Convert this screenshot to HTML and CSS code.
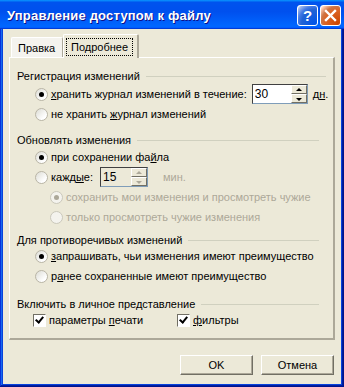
FILE: index.html
```html
<!DOCTYPE html>
<html lang="ru">
<head>
    <meta charset="UTF-8">
    <title>Управление доступом к файлу</title>
    <link rel="stylesheet" href="styles.css">
</head>
<body>
    <div class="window">
        <!-- Title bar -->
        <div class="titlebar">
            <span class="title">Управление доступом к файлу</span>
            <div class="controls">
                <span class="ctl help">?</span>
                <span class="ctl close">
                    <svg width="13" height="13" viewBox="0 0 13 13"><path d="M2 2 L11 11 M11 2 L2 11" stroke="#fff" stroke-width="2.4" stroke-linecap="square"/></svg>
                </span>
            </div>
        </div>

        <div class="frame">
            <div class="tabs">
                <div class="tab">Правка</div>
                <div class="tab active"><span class="focus">Подробнее</span></div>
            </div>

            <div class="panel">
                <div class="heading wide">Регистрация изменений</div>
                <div class="row">
                    <span class="radio checked"></span>
                    <span class="label"><u>х</u>ранить журнал изменений в течение:</span>
                    <span class="spin days"><span class="value">30</span><span class="arrows"><span class="up"></span><span class="down"></span></span></span>
                    <span class="unit">д<u>н</u>.</span>
                </div>
                <div class="row">
                    <span class="radio"></span>
                    <span class="label">не хранить <u>ж</u>урнал изменений</span>
                </div>

                <div class="heading gap">Обновлять изменения</div>
                <div class="row tight">
                    <span class="radio checked"></span>
                    <span class="label">при сохранении фа<u>й</u>ла</span>
                </div>
                <div class="row">
                    <span class="radio"></span>
                    <span class="label">кажд<u>ы</u>е:</span>
                    <span class="spin mins disabled"><span class="value">15</span><span class="arrows"><span class="up"></span><span class="down"></span></span></span>
                    <span class="unit muted">мин.</span>
                </div>
                <div class="row sub">
                    <span class="radio checked disabled"></span>
                    <span class="label muted">сохранить мои изменения и просмотреть чужие</span>
                </div>
                <div class="row sub">
                    <span class="radio disabled"></span>
                    <span class="label muted">только просмотреть чужие изменения</span>
                </div>

                <div class="heading small-gap">Для противоречивых изменений</div>
                <div class="row tighter">
                    <span class="radio checked"></span>
                    <span class="label"><u>з</u>апрашивать, чьи изменения имеют преимущество</span>
                </div>
                <div class="row">
                    <span class="radio"></span>
                    <span class="label">р<u>а</u>нее сохраненные имеют преимущество</span>
                </div>

                <div class="heading big-gap">Включить в личное представление</div>
                <div class="row checks tighter">
                    <span class="check-item">
                        <span class="checkbox"></span>
                        <span class="label">параметры <u>п</u>ечати</span>
                    </span>
                    <span class="check-item">
                        <span class="checkbox"></span>
                        <span class="label"><u>ф</u>ильтры</span>
                    </span>
                </div>
            </div>

            <div class="buttons">
                <button class="btn">OK</button>
                <button class="btn">Отмена</button>
            </div>
        </div>
    </div>
</body>
</html>
```

FILE: styles.css
```css
html, body {
    margin: 0;
    padding: 0;
}
body {
    width: 344px;
    height: 387px;
    overflow: hidden;
    font-family: "Liberation Sans", Arial, sans-serif;
    font-size: 11px;
    color: #000;
}
.window {
    width: 344px;
    height: 387px;
    display: flex;
    flex-direction: column;
    background: #0842dc;
    box-shadow: inset -1px -1px #00138c, inset 1px 0 #0831d9, inset -2px -2px #001ea0, inset 2px 0 #166aee;
}
.titlebar {
    height: 29px;
    flex: none;
    display: flex;
    align-items: center;
    justify-content: space-between;
    padding: 0 3px 0 7px;
    background: linear-gradient(180deg, #0997ff, #0053ee 8%, #0050ee 40%, #06f 88%, #06f 93%, #005bff 95%, #003dd7 96%, #003dd7);
}
.title {
    color: #fff;
    font-weight: bold;
    font-size: 13px;
    letter-spacing: 0.2px;
    text-shadow: 1px 1px #0f1089;
    margin-top: 1px;
}
.controls {
    display: flex;
    gap: 2px;
    margin-top: 2px;
}
.ctl {
    width: 21px;
    height: 21px;
    box-sizing: border-box;
    border: 1px solid #fff;
    border-radius: 3px;
    display: flex;
    align-items: center;
    justify-content: center;
    color: #fff;
    font-weight: bold;
    font-size: 15px;
}
.help {
    background: radial-gradient(circle at 90% 90%, #0054e9 0%, #2263d5 55%, #4479e4 70%, #a3bbec 90%, #fff 100%);
}
.close {
    background: radial-gradient(circle at 90% 90%, #cc4600 0%, #dc6527 55%, #cd7546 70%, #ffccb2 90%, #fff 100%);
}
.frame {
    flex: 1;
    margin: 0 3px 3px;
    background: #ece9d8;
    padding: 5px 6px 0;
    display: flex;
    flex-direction: column;
}

/* Tabs */
.tabs {
    display: flex;
    align-items: flex-end;
    height: 23px;
    padding-left: 2px;
}
.tab {
    height: 20px;
    box-sizing: border-box;
    width: 52px;
    padding-left: 6px;
    line-height: 20px;
    border-top: 1px solid #fff;
    border-left: 1px solid #fff;
    border-right: 1px solid #aca899;
    background: #f4f3ee;
    border-radius: 2px 2px 0 0;
}
.tab.active {
    width: 76px;
    height: 24px;
    margin-bottom: -1px;
    position: relative;
    background: #ece9d8;
    border-right: 2px solid #aca899;
    padding: 4px 0 0 3px;
    line-height: 14px;
}
.focus {
    display: inline-block;
    outline: 1px dotted #000;
    padding: 1px 4px 0;
    height: 15px;
}

/* Panel */
.panel {
    height: 283px;
    box-sizing: border-box;
    border-top: 1px solid #fff;
    border-left: 1px solid #fff;
    border-right: 2px solid #aca899;
    border-bottom: 2px solid #aca899;
    padding: 10px 0 0 7px;
}
.heading {
    display: flex;
    align-items: center;
    height: 16px;
    width: 302px;
}
.heading.wide {
    width: 309px;
}
.heading::after {
    content: "";
    flex: 1;
    margin-left: 6px;
    border-top: 1px solid #d0d0bf;
}
.heading.gap {
    margin-top: 8px;
}
.heading.small-gap {
    margin-top: 5px;
}
.heading.big-gap {
    margin-top: 10px;
}
.row {
    display: flex;
    align-items: center;
    height: 20px;
    padding-left: 18px;
}
.row.tight {
    margin-top: -1px;
}
.row.tighter {
    margin-top: -2px;
}
.row.sub {
    padding-left: 33px;
}
.label {
    margin-left: 3px;
    white-space: nowrap;
}
.muted {
    color: #aca899;
}
.radio {
    width: 13px;
    height: 13px;
    box-sizing: border-box;
    border-radius: 50%;
    border: 1px solid #b9b5a6;
    background: linear-gradient(135deg, #dcdcd4, #fff 75%);
    display: flex;
    align-items: center;
    justify-content: center;
}
.radio.checked::after {
    content: "";
    width: 5px;
    height: 5px;
    border-radius: 50%;
    background: #000;
}
.radio.disabled {
    background: #f4f3ee;
    border-color: #cac8bb;
}
.radio.checked.disabled::after {
    background: #aca899;
}

/* Spinner */
.spin {
    display: flex;
    height: 20px;
    box-sizing: border-box;
    border: 1px solid #7f9db9;
    border-top-color: #404040;
    border-left-color: #404040;
    background: #fff;
    margin-left: 5px;
}
.spin.days {
    width: 56px;
}
.spin.mins {
    width: 48px;
    margin-left: 7px;
}
.spin.disabled {
    background: #ece9d8;
}
.value {
    flex: 1;
    padding: 2px 0 0 2px;
    font-size: 12px;
}
.arrows {
    width: 16px;
    display: flex;
    flex-direction: column;
}
.up, .down {
    flex: 1;
    background: #ece9d8;
    border: 1px solid;
    border-color: #fff #716f64 #716f64 #fff;
    position: relative;
}
.up::after, .down::after {
    content: "";
    position: absolute;
    left: 4px;
    border-left: 3px solid transparent;
    border-right: 3px solid transparent;
}
.up::after {
    top: 2px;
    border-bottom: 3px solid #000;
}
.down::after {
    top: 3px;
    border-top: 3px solid #000;
}
.disabled .up::after {
    border-bottom-color: #aca899;
}
.disabled .down::after {
    border-top-color: #aca899;
}
.unit {
    margin-left: 5px;
}
.unit.muted {
    margin-left: 15px;
}

/* Checkboxes */
.row.checks {
    padding-left: 16px;
}
.check-item {
    display: flex;
    align-items: center;
    width: 144px;
}
.checkbox {
    width: 13px;
    height: 13px;
    box-sizing: border-box;
    border: 1px solid;
    border-color: #716f64 #fff #fff #716f64;
    background: #fff;
    position: relative;
}
.checkbox::after {
    content: "";
    position: absolute;
    left: 3px;
    top: 0px;
    width: 3px;
    height: 6px;
    border: solid #000;
    border-width: 0 2px 2px 0;
    transform: rotate(40deg);
}

/* Buttons */
.buttons {
    display: flex;
    justify-content: flex-end;
    gap: 8px;
    padding: 15px 1px 0 0;
}
.btn {
    width: 73px;
    height: 20px;
    font-family: "Liberation Sans", Arial, sans-serif;
    font-size: 11px;
    color: #000;
    background: #ece9d8;
    border: 1px solid;
    border-color: #fff #716f64 #716f64 #fff;
    box-shadow: inset -1px -1px #aca899;
    padding: 0;
}
```
